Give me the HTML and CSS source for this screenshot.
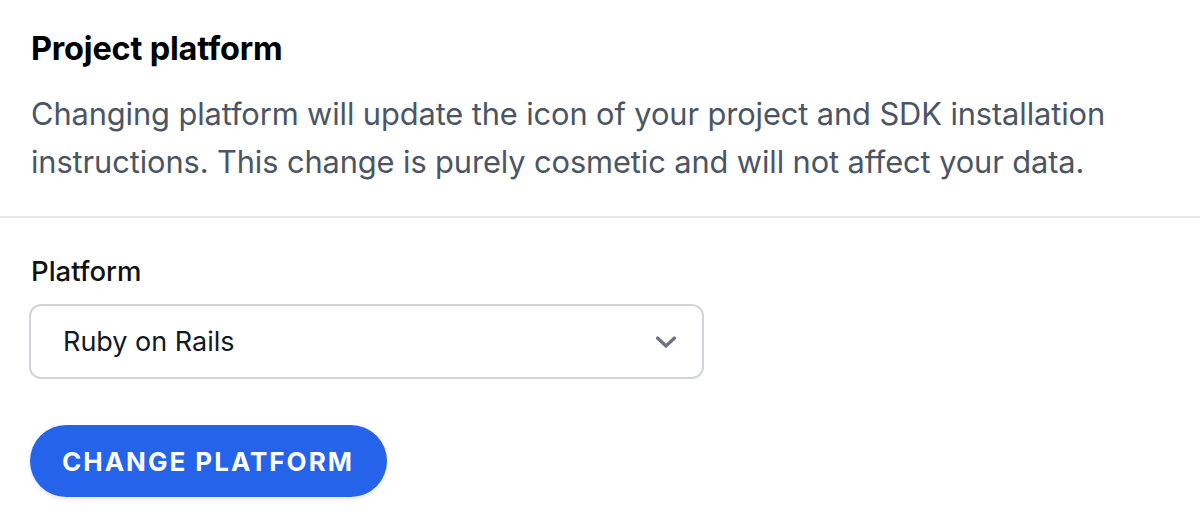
FILE: index.html
```html
<!DOCTYPE html>
<html>
<head>
<meta charset="utf-8">
<link rel="stylesheet" href="styles.css">
</head>
<body>
<div class="page">
  <section class="head">
    <h2 class="title">Project platform</h2>
    <p class="desc">Changing platform will update the icon of your project and SDK installation instructions. This change is purely cosmetic and will not affect your data.</p>
  </section>
  <section class="body">
    <label class="label">Platform</label>
    <div class="select">
      <span class="value">Ruby on Rails</span>
      <svg class="chev" width="22" height="14" viewBox="0 0 22 14" fill="none" stroke="#6b7280" stroke-width="3.2" stroke-linecap="round" stroke-linejoin="round"><path d="M2.5 3l8.5 8 8.5-8"/></svg>
    </div>
    <button class="btn">CHANGE PLATFORM</button>
  </section>
</div>
</body>
</html>
```
FILE: styles.css
```css
* { box-sizing: border-box; }
html, body { margin: 0; padding: 0; background: #fff; }
body { font-family: Inter, "Noto Sans", sans-serif; }
.page { width: 1200px; }
.head { padding: 25px 31px 30px; border-bottom: 2px solid #e5e7eb; }
.title { margin: 0; font-size: 32.5px; line-height: 48px; font-weight: 700; color: #000; letter-spacing: -0.2px; }
.desc { margin: 17px 0 0; font-size: 30.8px; line-height: 48px; color: #4b5563; letter-spacing: -0.1px; }
.body { padding: 35px 29px; display: flex; flex-direction: column; align-items: flex-start; }
.label { font-size: 27.5px; line-height: 36px; font-weight: 500; color: #111; margin-left: 2px; }
.select { margin-top: 15px; width: 675px; height: 75px; border: 2px solid #d1d5db; border-radius: 12px; display: flex; align-items: center; justify-content: space-between; padding: 0 25px 0 32px; }
.value { font-size: 27px; color: #111827; }
.btn { margin-top: 46px; margin-left: 1px; height: 72px; padding: 0 33px 0 32px; border: none; border-radius: 36px; background: #2563eb; color: #fff; font-family: Inter, sans-serif; font-size: 26px; font-weight: 700; letter-spacing: 2px; box-shadow: 0 2px 4px rgba(0,0,0,0.1); }
```
